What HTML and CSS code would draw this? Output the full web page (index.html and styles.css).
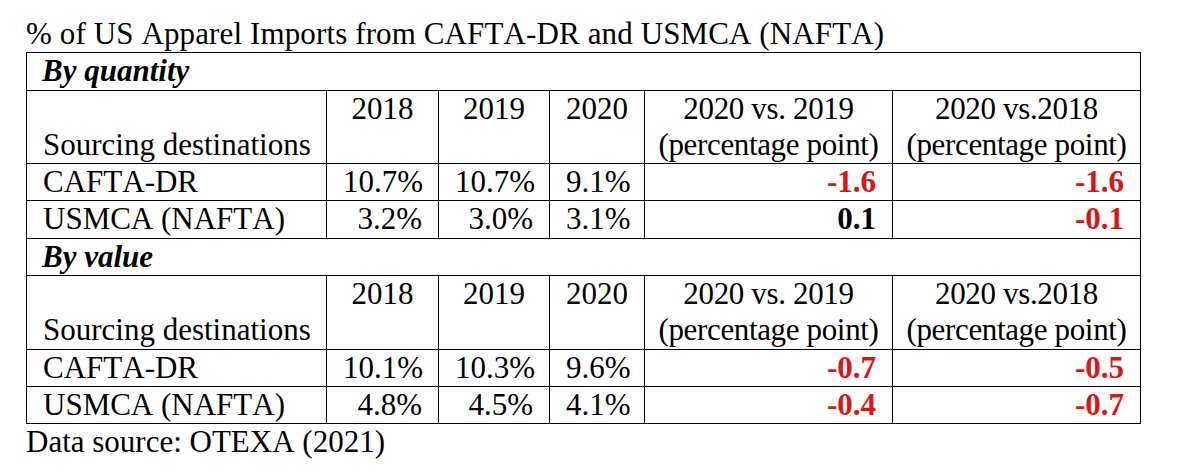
FILE: index.html
```html
<!DOCTYPE html>
<html lang="en">
<head>
<meta charset="utf-8">
<title>% of US Apparel Imports from CAFTA-DR and USMCA (NAFTA)</title>
<link rel="stylesheet" href="styles.css">
</head>
<body>
<div class="page">
  <div class="title">% of US Apparel Imports from CAFTA-DR and USMCA (NAFTA)</div>
  <table class="data">
    <colgroup>
      <col class="c-name">
      <col class="c-y1">
      <col class="c-y2">
      <col class="c-y3">
      <col class="c-d">
      <col class="c-d">
    </colgroup>
    <tbody>
      <tr><td class="section" colspan="6">By quantity</td></tr>
      <tr class="head">
        <td class="name-head">Sourcing destinations</td>
        <td class="year">2018</td>
        <td class="year">2019</td>
        <td class="year">2020</td>
        <td class="change">2020 vs. 2019<br>(percentage point)</td>
        <td class="change">2020 vs.2018<br>(percentage point)</td>
      </tr>
      <tr>
        <td class="name">CAFTA-DR</td>
        <td class="num">10.7%</td>
        <td class="num">10.7%</td>
        <td class="num">9.1%</td>
        <td class="num diff neg">-1.6</td>
        <td class="num diff neg">-1.6</td>
      </tr>
      <tr>
        <td class="name">USMCA (NAFTA)</td>
        <td class="num">3.2%</td>
        <td class="num">3.0%</td>
        <td class="num">3.1%</td>
        <td class="num diff">0.1</td>
        <td class="num diff neg">-0.1</td>
      </tr>
      <tr><td class="section" colspan="6">By value</td></tr>
      <tr class="head">
        <td class="name-head">Sourcing destinations</td>
        <td class="year">2018</td>
        <td class="year">2019</td>
        <td class="year">2020</td>
        <td class="change">2020 vs. 2019<br>(percentage point)</td>
        <td class="change">2020 vs.2018<br>(percentage point)</td>
      </tr>
      <tr>
        <td class="name">CAFTA-DR</td>
        <td class="num">10.1%</td>
        <td class="num">10.3%</td>
        <td class="num">9.6%</td>
        <td class="num diff neg">-0.7</td>
        <td class="num diff neg">-0.5</td>
      </tr>
      <tr>
        <td class="name">USMCA (NAFTA)</td>
        <td class="num">4.8%</td>
        <td class="num">4.5%</td>
        <td class="num">4.1%</td>
        <td class="num diff neg">-0.4</td>
        <td class="num diff neg">-0.7</td>
      </tr>
    </tbody>
  </table>
  <div class="source">Data source: OTEXA (2021)</div>
</div>
</body>
</html>
```

FILE: styles.css
```css
html, body {
  margin: 0;
  padding: 0;
  background: #ffffff;
}

body {
  font-family: "Liberation Serif", "Times New Roman", serif;
  font-size: 31px;
  line-height: 36.3px;
  font-kerning: none;
  color: #000000;
}

.page {
  padding: 16px 0 0 26px;
}

.title {
  white-space: nowrap;
  letter-spacing: 0.12px;
}

.data {
  border-collapse: collapse;
  table-layout: fixed;
  width: 1115px;
}

.c-name { width: 300px; }
.c-y1 { width: 112px; }
.c-y2 { width: 111px; }
.c-y3 { width: 95px; }
.c-d { width: 248px; }

.data td {
  border: 1px solid #000000;
  padding: 0 16px 0 16px;
  white-space: nowrap;
  vertical-align: top;
}

.data td.section {
  font-weight: bold;
  font-style: italic;
  padding-left: 15px;
}

.data td.name-head {
  vertical-align: bottom;
}

.data td.year {
  text-align: center;
  padding: 0;
}

.data td.change {
  text-align: center;
  padding: 0;
  letter-spacing: -0.35px;
}

.data td.num {
  text-align: right;
}

.data td.diff {
  font-weight: bold;
}

.data td.neg {
  color: #dc1414;
}

.source {
  white-space: nowrap;
}
```
